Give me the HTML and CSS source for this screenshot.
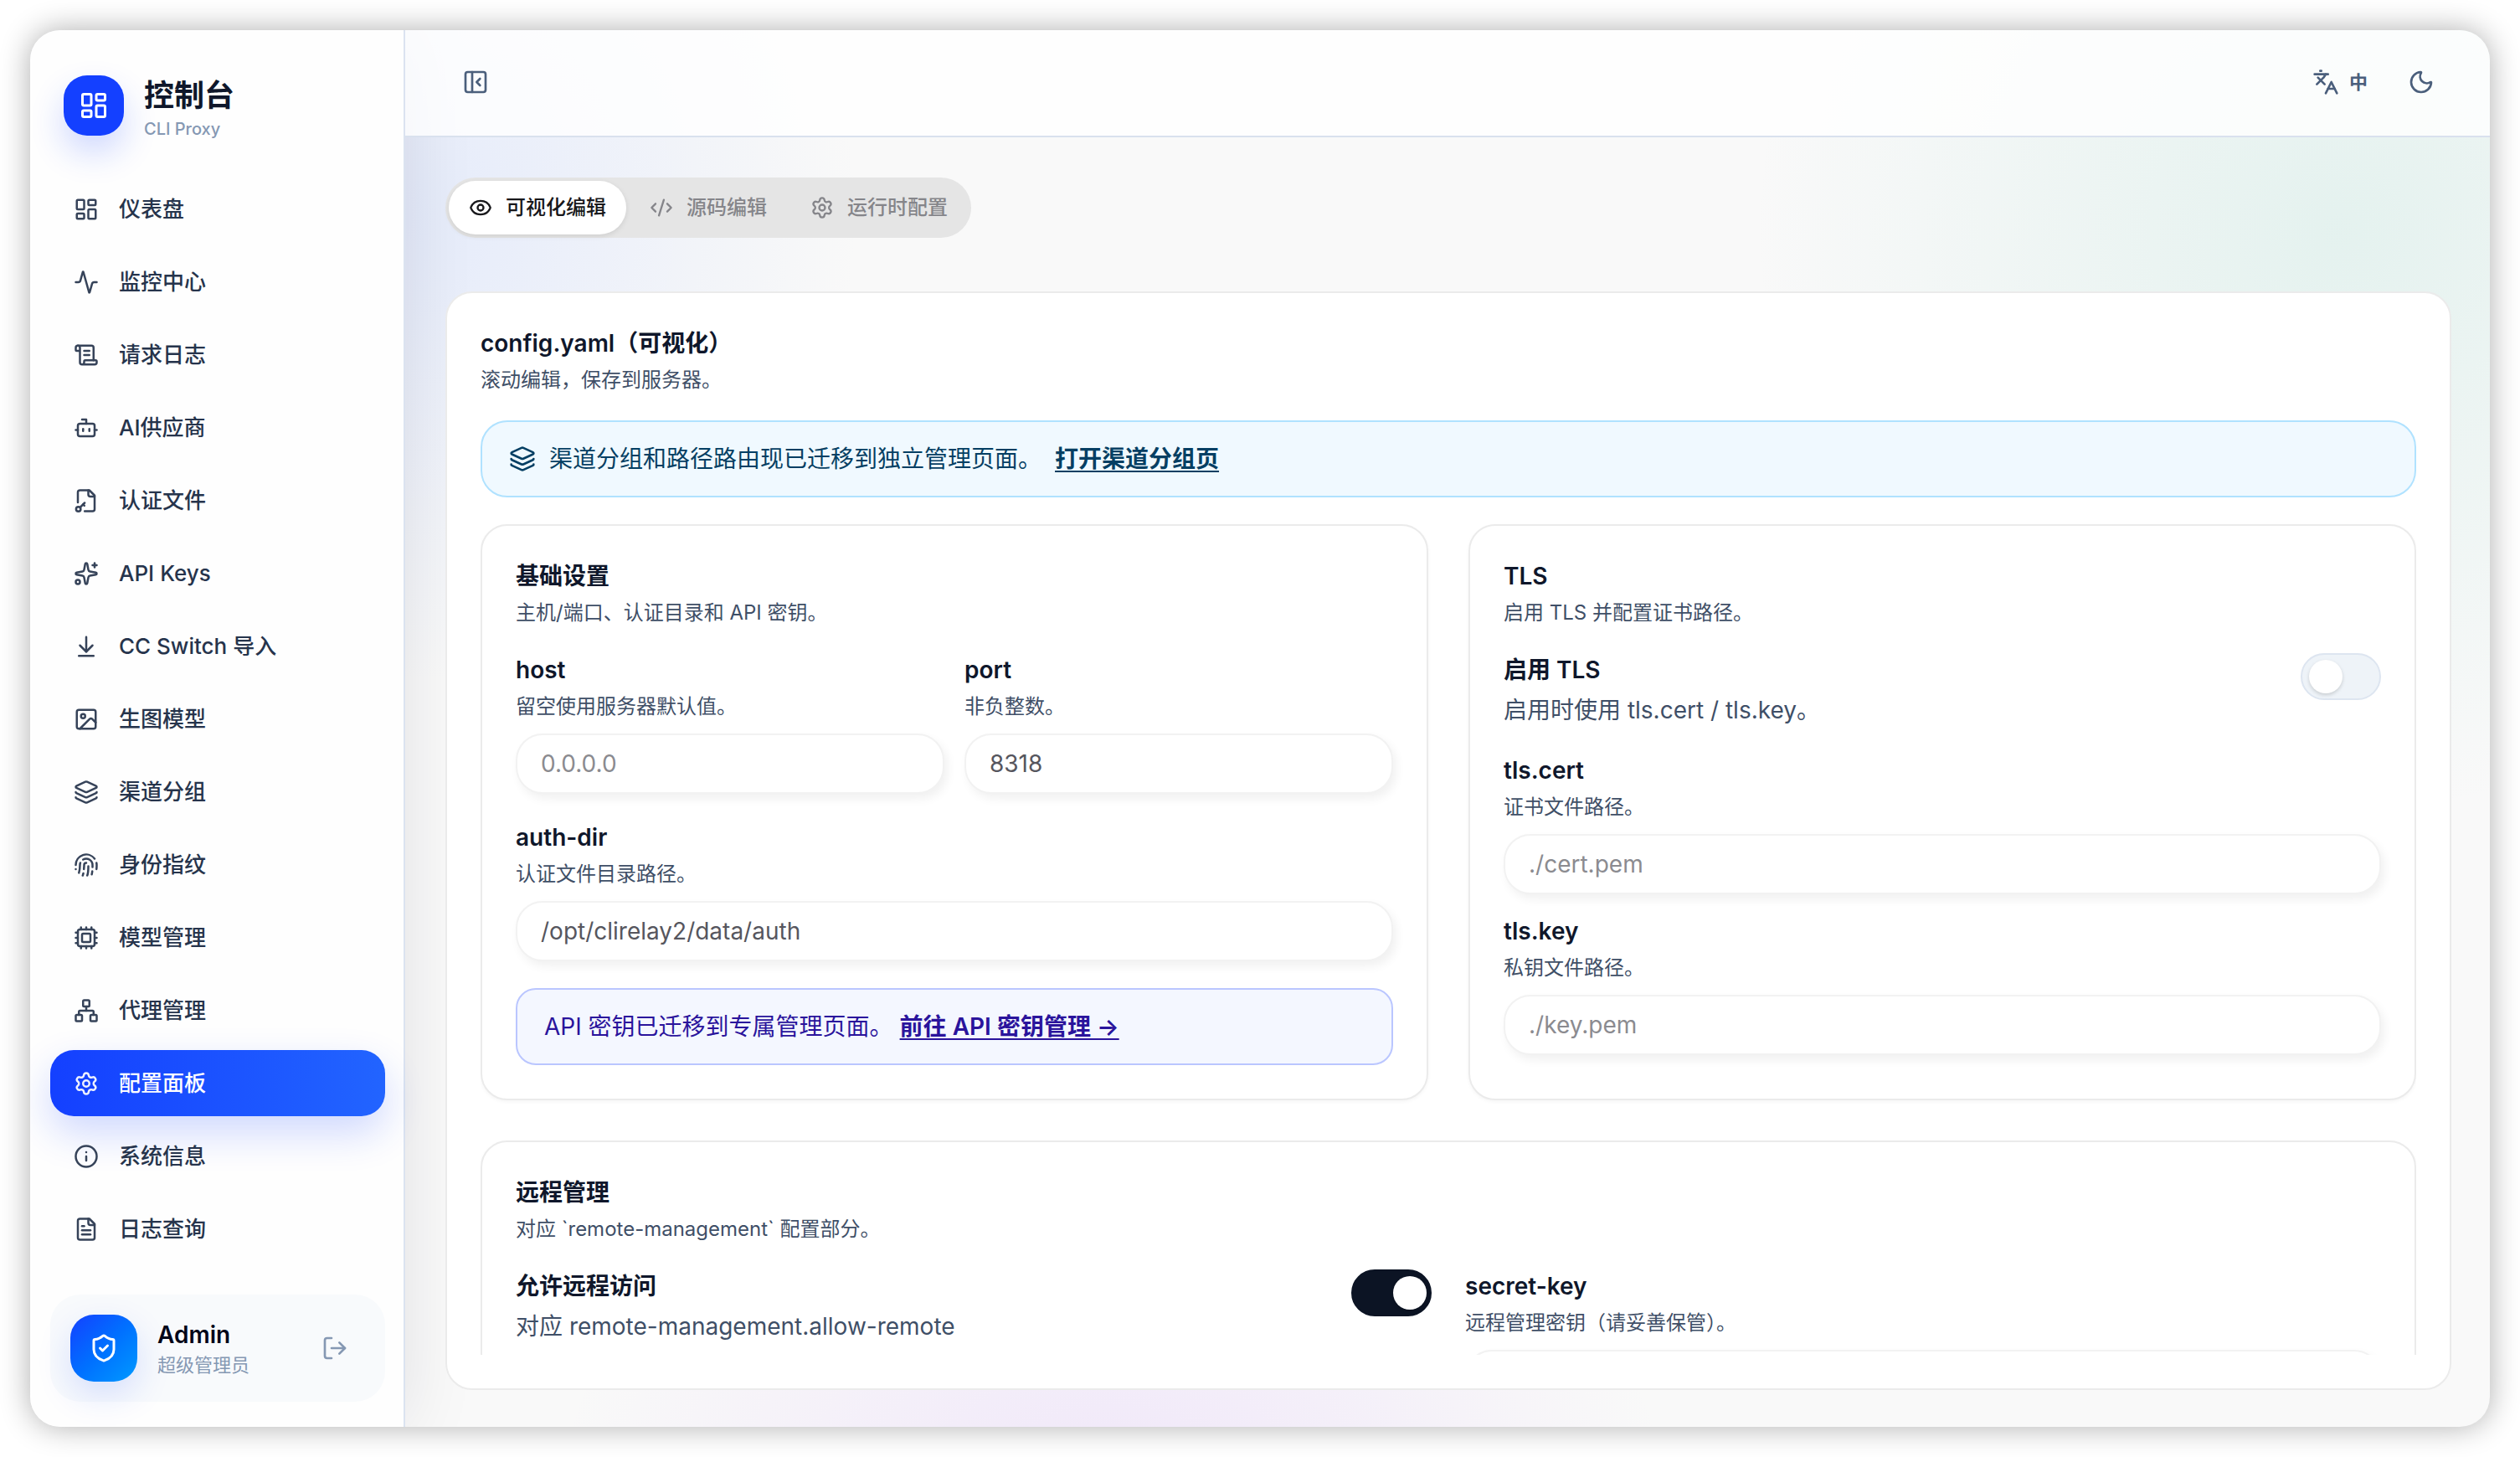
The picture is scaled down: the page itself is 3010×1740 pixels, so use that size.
FILE: index.html
```html
<!DOCTYPE html>
<html lang="zh-CN">
<head>
<meta charset="utf-8">
<meta name="viewport" content="width=device-width, initial-scale=1">
<title>控制台 - 配置面板</title>
<link rel="stylesheet" href="styles.css">
</head>
<body>
<div class="window">
  <aside class="sidebar">
    <div class="brand">
      <div class="brand-logo">
        <svg class="icon" viewBox="0 0 24 24" aria-hidden="true"><rect width="7" height="9" x="3" y="3" rx="1"/><rect width="7" height="5" x="14" y="3" rx="1"/><rect width="7" height="9" x="14" y="12" rx="1"/><rect width="7" height="5" x="3" y="16" rx="1"/></svg>
      </div>
      <div>
        <div class="brand-title">控制台</div>
        <div class="brand-sub">CLI Proxy</div>
      </div>
    </div>
    <nav class="nav">
      <a class="nav-item" href="#dashboard"><svg class="icon" viewBox="0 0 24 24" aria-hidden="true"><rect width="7" height="9" x="3" y="3" rx="1"/><rect width="7" height="5" x="14" y="3" rx="1"/><rect width="7" height="9" x="14" y="12" rx="1"/><rect width="7" height="5" x="3" y="16" rx="1"/></svg>仪表盘</a>
      <a class="nav-item" href="#monitor"><svg class="icon" viewBox="0 0 24 24" aria-hidden="true"><path d="M22 12h-2.48a2 2 0 0 0-1.93 1.46l-2.35 8.36a.25.25 0 0 1-.48 0L9.24 2.18a.25.25 0 0 0-.48 0l-2.35 8.36A2 2 0 0 1 4.49 12H2"/></svg>监控中心</a>
      <a class="nav-item" href="#requests"><svg class="icon" viewBox="0 0 24 24" aria-hidden="true"><path d="M15 12h-5"/><path d="M15 8h-5"/><path d="M19 17V5a2 2 0 0 0-2-2H4"/><path d="M8 21h12a2 2 0 0 0 2-2v-1a1 1 0 0 0-1-1H11a1 1 0 0 0-1 1v1a2 2 0 1 1-4 0V5a2 2 0 1 0-4 0v2a1 1 0 0 0 1 1h3"/></svg>请求日志</a>
      <a class="nav-item" href="#providers"><svg class="icon" viewBox="0 0 24 24" aria-hidden="true"><path d="M12 8V4H8"/><rect width="16" height="12" x="4" y="8" rx="2"/><path d="M2 14h2"/><path d="M20 14h2"/><path d="M15 13v2"/><path d="M9 13v2"/></svg>AI供应商</a>
      <a class="nav-item" href="#auth-files"><svg class="icon" viewBox="0 0 24 24" aria-hidden="true"><path d="M14 2v4a2 2 0 0 0 2 2h4"/><path d="M4 13.5V4a2 2 0 0 1 2-2h9l5 5v13a2 2 0 0 1-2 2h-7.500"/><circle cx="4.500" cy="20" r="2.200"/><path d="m6 18.500 4.500-4.500"/><path d="m9 15.500 1.200 1.200"/></svg>认证文件</a>
      <a class="nav-item" href="#api-keys"><svg class="icon" viewBox="0 0 24 24" aria-hidden="true"><path d="M11.017 2.814a1 1 0 0 1 1.966 0l1.051 5.558a2 2 0 0 0 1.594 1.594l5.558 1.051a1 1 0 0 1 0 1.966l-5.558 1.051a2 2 0 0 0-1.594 1.594l-1.051 5.558a1 1 0 0 1-1.966 0l-1.051-5.558a2 2 0 0 0-1.594-1.594l-5.558-1.051a1 1 0 0 1 0-1.966l5.558-1.051a2 2 0 0 0 1.594-1.594z"/><path d="M20 2v4"/><path d="M22 4h-4"/><circle cx="4" cy="20" r="2"/></svg>API Keys</a>
      <a class="nav-item" href="#cc-switch"><svg class="icon" viewBox="0 0 24 24" aria-hidden="true"><path d="M12 17V3"/><path d="m6 11 6 6 6-6"/><path d="M19 21H5"/></svg>CC Switch 导入</a>
      <a class="nav-item" href="#image-models"><svg class="icon" viewBox="0 0 24 24" aria-hidden="true"><rect width="18" height="18" x="3" y="3" rx="2"/><circle cx="9" cy="9" r="2"/><path d="m21 15-3.086-3.086a2 2 0 0 0-2.828 0L6 21"/></svg>生图模型</a>
      <a class="nav-item" href="#channels"><svg class="icon" viewBox="0 0 24 24" aria-hidden="true"><path d="M12.830 2.180a2 2 0 0 0-1.660 0L2.600 6.080a1 1 0 0 0 0 1.830l8.580 3.910a2 2 0 0 0 1.660 0l8.580-3.900a1 1 0 0 0 0-1.830z"/><path d="M2 12a1 1 0 0 0 .58.91l8.600 3.910a2 2 0 0 0 1.650 0l8.580-3.900A1 1 0 0 0 22 12"/><path d="M2 17a1 1 0 0 0 .58.91l8.600 3.910a2 2 0 0 0 1.650 0l8.580-3.900A1 1 0 0 0 22 17"/></svg>渠道分组</a>
      <a class="nav-item" href="#fingerprints"><svg class="icon" viewBox="0 0 24 24" aria-hidden="true"><path d="M12 10a2 2 0 0 0-2 2c0 1.020-.1 2.510-.26 4"/><path d="M14 13.120c0 2.380 0 6.380-1 8.880"/><path d="M17.290 21.020c.12-.6.430-2.300.5-3.020"/><path d="M2 12a10 10 0 0 1 18-6"/><path d="M2 16h.01"/><path d="M21.800 16c.2-2 .131-5.354 0-6"/><path d="M5 19.500C5.500 18 6 15 6 12a6 6 0 0 1 .34-2"/><path d="M8.650 22c.21-.66.450-1.320.570-2"/><path d="M9 6.800a6 6 0 0 1 9 5.200v2"/></svg>身份指纹</a>
      <a class="nav-item" href="#models"><svg class="icon" viewBox="0 0 24 24" aria-hidden="true"><path d="M12 20v2M12 2v2M17 20v2M17 2v2M2 12h2M2 17h2M2 7h2M20 12h2M20 17h2M20 7h2M7 20v2M7 2v2"/><rect x="4" y="4" width="16" height="16" rx="2"/><rect x="8" y="8" width="8" height="8" rx="1"/></svg>模型管理</a>
      <a class="nav-item" href="#proxies"><svg class="icon" viewBox="0 0 24 24" aria-hidden="true"><rect x="16" y="16" width="6" height="6" rx="1"/><rect x="2" y="16" width="6" height="6" rx="1"/><rect x="9" y="2" width="6" height="6" rx="1"/><path d="M5 16v-3a1 1 0 0 1 1-1h12a1 1 0 0 1 1 1v3"/><path d="M12 12V8"/></svg>代理管理</a>
      <a class="nav-item active" href="#config" aria-current="page"><svg class="icon" viewBox="0 0 24 24" aria-hidden="true"><path d="M9.671 4.136a2.340 2.340 0 0 1 4.659 0 2.340 2.340 0 0 0 3.319 1.915 2.340 2.340 0 0 1 2.330 4.033 2.340 2.340 0 0 0 0 3.831 2.340 2.340 0 0 1-2.330 4.033 2.340 2.340 0 0 0-3.319 1.915 2.340 2.340 0 0 1-4.659 0 2.340 2.340 0 0 0-3.320-1.915 2.340 2.340 0 0 1-2.330-4.033 2.340 2.340 0 0 0 0-3.831A2.340 2.340 0 0 1 6.350 6.051a2.340 2.340 0 0 0 3.319-1.915"/><circle cx="12" cy="12" r="3"/></svg>配置面板</a>
      <a class="nav-item" href="#system"><svg class="icon" viewBox="0 0 24 24" aria-hidden="true"><circle cx="12" cy="12" r="10"/><path d="M12 16v-4"/><path d="M12 8h.01"/></svg>系统信息</a>
      <a class="nav-item" href="#logs"><svg class="icon" viewBox="0 0 24 24" aria-hidden="true"><path d="M15 2H6a2 2 0 0 0-2 2v16a2 2 0 0 0 2 2h12a2 2 0 0 0 2-2V7Z"/><path d="M14 2v4a2 2 0 0 0 2 2h4"/><path d="M10 9H8"/><path d="M16 13H8"/><path d="M16 17H8"/></svg>日志查询</a>
    </nav>
    <div class="user">
      <div class="avatar"><svg class="icon" viewBox="0 0 24 24" aria-hidden="true"><path d="M20 13c0 5-3.500 7.500-7.660 8.950a1 1 0 0 1-.67-.01C7.500 20.500 4 18 4 13V6a1 1 0 0 1 1-1c2 0 4.500-1.200 6.240-2.720a1.170 1.170 0 0 1 1.520 0C14.510 3.810 17 5 19 5a1 1 0 0 1 1 1z"/><path d="m9 12 2 2 4-4"/></svg></div>
      <div class="user-text">
        <div class="user-name">Admin</div>
        <div class="user-role">超级管理员</div>
      </div>
      <button class="icon-btn logout" type="button" aria-label="退出登录"><svg class="icon" viewBox="0 0 24 24" aria-hidden="true"><path d="m16 17 5-5-5-5"/><path d="M21 12H9"/><path d="M9 21H5a2 2 0 0 1-2-2V5a2 2 0 0 1 2-2h4"/></svg></button>
    </div>
  </aside>

  <div class="main">
    <header class="topbar">
      <button class="icon-btn" type="button" aria-label="收起侧栏"><svg class="icon" viewBox="0 0 24 24" aria-hidden="true"><rect width="18" height="18" x="3" y="3" rx="2"/><path d="M9 3v18"/><path d="m16 15-3-3 3-3"/></svg></button>
      <div class="topbar-actions">
        <button class="icon-btn lang" type="button" aria-label="切换语言"><svg class="icon" viewBox="0 0 24 24" aria-hidden="true"><path d="m5 8 6 6"/><path d="m4 14 6-6 2-3"/><path d="M2 5h12"/><path d="M7 2h1"/><path d="m22 22-5-10-5 10"/><path d="M14 18h6"/></svg><span>中</span></button>
        <button class="icon-btn" type="button" aria-label="切换主题"><svg class="icon" viewBox="0 0 24 24" aria-hidden="true"><path d="M20.985 12.486a9 9 0 1 1-9.473-9.472c.405-.022.617.460.402.803a6 6 0 0 0 8.268 8.268c.344-.215.825-.004.803.401"/></svg></button>
      </div>
    </header>

    <main class="content">
      <div class="tabs" role="tablist">
        <button class="tab selected" type="button" role="tab" aria-selected="true"><svg class="icon" viewBox="0 0 24 24" aria-hidden="true"><path d="M2.062 12.348a1 1 0 0 1 0-.696 10.750 10.750 0 0 1 19.876 0 1 1 0 0 1 0 .696 10.750 10.750 0 0 1-19.876 0"/><circle cx="12" cy="12" r="3"/></svg>可视化编辑</button>
        <button class="tab" type="button" role="tab" aria-selected="false"><svg class="icon" viewBox="0 0 24 24" aria-hidden="true"><path d="m18 16 4-4-4-4"/><path d="m6 8-4 4 4 4"/><path d="m14.500 4-5 16"/></svg>源码编辑</button>
        <button class="tab" type="button" role="tab" aria-selected="false"><svg class="icon" viewBox="0 0 24 24" aria-hidden="true"><path d="M9.671 4.136a2.340 2.340 0 0 1 4.659 0 2.340 2.340 0 0 0 3.319 1.915 2.340 2.340 0 0 1 2.330 4.033 2.340 2.340 0 0 0 0 3.831 2.340 2.340 0 0 1-2.330 4.033 2.340 2.340 0 0 0-3.319 1.915 2.340 2.340 0 0 1-4.659 0 2.340 2.340 0 0 0-3.320-1.915 2.340 2.340 0 0 1-2.330-4.033 2.340 2.340 0 0 0 0-3.831A2.340 2.340 0 0 1 6.350 6.051a2.340 2.340 0 0 0 3.319-1.915"/><circle cx="12" cy="12" r="3"/></svg>运行时配置</button>
      </div>

      <section class="panel">
        <div class="panel-scroll">
          <div class="heading">
            <h1 class="title">config.yaml（可视化）</h1>
            <p class="hint">滚动编辑，保存到服务器。</p>
          </div>

          <div class="notice notice-sky">
            <svg class="icon" viewBox="0 0 24 24" aria-hidden="true"><path d="M12.830 2.180a2 2 0 0 0-1.660 0L2.600 6.080a1 1 0 0 0 0 1.830l8.580 3.910a2 2 0 0 0 1.660 0l8.580-3.900a1 1 0 0 0 0-1.830z"/><path d="M2 12a1 1 0 0 0 .58.91l8.600 3.910a2 2 0 0 0 1.650 0l8.580-3.900A1 1 0 0 0 22 12"/><path d="M2 17a1 1 0 0 0 .58.91l8.600 3.910a2 2 0 0 0 1.650 0l8.580-3.900A1 1 0 0 0 22 17"/></svg>
            <span>渠道分组和路径路由现已迁移到独立管理页面。</span>
            <a href="#channels">打开渠道分组页</a>
          </div>

          <div class="sections">
            <section class="section">
              <div class="heading">
                <h2 class="title">基础设置</h2>
                <p class="hint">主机/端口、认证目录和 API 密钥。</p>
              </div>
              <div class="pair">
                <div class="field">
                  <label class="title" for="host">host</label>
                  <p class="hint">留空使用服务器默认值。</p>
                  <input class="input" id="host" type="text" placeholder="0.0.0.0">
                </div>
                <div class="field">
                  <label class="title" for="port">port</label>
                  <p class="hint">非负整数。</p>
                  <input class="input" id="port" type="text" value="8318">
                </div>
              </div>
              <div class="field">
                <label class="title" for="auth-dir">auth-dir</label>
                <p class="hint">认证文件目录路径。</p>
                <input class="input" id="auth-dir" type="text" value="/opt/clirelay2/data/auth">
              </div>
              <p class="notice notice-indigo"><span>API 密钥已迁移到专属管理页面。</span><a href="#api-keys">前往 API 密钥管理 →</a></p>
            </section>

            <section class="section">
              <div class="heading">
                <h2 class="title">TLS</h2>
                <p class="hint">启用 TLS 并配置证书路径。</p>
              </div>
              <div class="switch-row">
                <div class="heading">
                  <label class="title" for="tls-enable">启用 TLS</label>
                  <p class="desc">启用时使用 tls.cert / tls.key。</p>
                </div>
                <input class="switch" id="tls-enable" type="checkbox" role="switch">
              </div>
              <div class="fields">
                <div class="field">
                  <label class="title" for="tls-cert">tls.cert</label>
                  <p class="hint">证书文件路径。</p>
                  <input class="input" id="tls-cert" type="text" placeholder="./cert.pem">
                </div>
                <div class="field">
                  <label class="title" for="tls-key">tls.key</label>
                  <p class="hint">私钥文件路径。</p>
                  <input class="input" id="tls-key" type="text" placeholder="./key.pem">
                </div>
              </div>
            </section>

            <section class="section wide">
              <div class="heading">
                <h2 class="title">远程管理</h2>
                <p class="hint">对应 `remote-management` 配置部分。</p>
              </div>
              <div class="pair pair-loose">
                <div class="switch-row">
                  <div class="heading">
                    <label class="title" for="allow-remote">允许远程访问</label>
                    <p class="desc">对应 remote-management.allow-remote</p>
                  </div>
                  <input class="switch" id="allow-remote" type="checkbox" role="switch" checked>
                </div>
                <div class="field">
                  <label class="title" for="secret-key">secret-key</label>
                  <p class="hint">远程管理密钥（请妥善保管）。</p>
                  <input class="input" id="secret-key" type="password">
                </div>
              </div>
            </section>
          </div>
        </div>
      </section>
    </main>
  </div>
</div>
</body>
</html>
```
FILE: styles.css
```css
*, *::before, *::after { box-sizing: border-box; }

body {
  margin: 0;
  height: 100vh;
  padding: 36px;
  background: #fff;
  color: #0f172b;
  font-family: Inter, "Noto Sans CJK SC", sans-serif;
  font-size: 28px;
  line-height: 40px;
}

h1, h2, p { margin: 0; }

button, input { font: inherit; color: inherit; }

button {
  border: 0;
  padding: 0;
  background: none;
}

.icon {
  flex: none;
  width: 32px;
  height: 32px;
  fill: none;
  stroke: currentColor;
  stroke-width: 2;
  stroke-linecap: round;
  stroke-linejoin: round;
}

/* Window shell */
.window {
  display: flex;
  height: 100%;
  overflow: hidden;
  border-radius: 36px;
  background:
    radial-gradient(circle 560px at 430px 220px, rgba(150, 180, 255, 0.21), rgba(150, 180, 255, 0) 100%),
    radial-gradient(circle 700px at calc(100% - 180px) 240px, rgba(110, 200, 180, 0.15), rgba(110, 200, 180, 0) 100%),
    radial-gradient(ellipse 660px 420px at 44% 104%, rgba(200, 150, 250, 0.18), rgba(200, 150, 250, 0) 100%),
    #f9f9f9;
  box-shadow: 0 0 36px rgba(0, 0, 0, 0.32);
}

/* Sidebar */
.sidebar {
  flex: none;
  display: flex;
  flex-direction: column;
  width: 448px;
  padding: 54px 22px 30px 24px;
  border-right: 2px solid #dbe3f0;
  background: #fefefe;
  box-shadow: 0 0 80px rgba(15, 23, 43, 0.1);
}

.brand {
  display: flex;
  align-items: flex-start;
  gap: 24px;
  padding: 0 16px;
}

.brand-logo {
  display: grid;
  place-items: center;
  width: 72px;
  height: 72px;
  border-radius: 28px;
  background: #1440ff;
  color: #fff;
  box-shadow: 0 20px 40px rgba(20, 64, 255, 0.2);
}

.brand-logo .icon { width: 36px; height: 36px; }

.brand-title {
  font-size: 36px;
  font-weight: 600;
  line-height: 48px;
}

.brand-sub {
  font-size: 20px;
  font-weight: 500;
  line-height: 32px;
  color: #8598b3;
}

.nav {
  display: flex;
  flex-direction: column;
  gap: 8px;
  margin-top: 40px;
}

.nav-item {
  display: flex;
  align-items: center;
  gap: 24px;
  padding: 20px 28px;
  border-radius: 28px;
  font-size: 26px;
  font-weight: 500;
  line-height: 39px;
  color: #26344c;
  text-decoration: none;
}

.nav-item .icon {
  width: 30px;
  height: 30px;
  opacity: 0.92;
}

.nav-item.active {
  background: linear-gradient(90deg, #1440ff, #2264ff);
  color: #fff;
  box-shadow: 0 20px 48px rgba(20, 64, 255, 0.2);
}

.user {
  display: flex;
  align-items: center;
  gap: 24px;
  margin-top: auto;
  padding: 24px;
  border-radius: 36px;
  background: #f8fafc;
}

.avatar {
  display: grid;
  place-items: center;
  width: 80px;
  height: 80px;
  border-radius: 28px;
  background: linear-gradient(135deg, #1440ff, #0070ff 50%, #009aff);
  color: #fff;
  box-shadow: 0 16px 40px rgba(20, 64, 255, 0.15);
}

.avatar .icon { width: 36px; height: 36px; }

.user-text { flex: 1; }

.user-name {
  font-weight: 600;
  line-height: 40px;
  color: #020618;
}

.user-role {
  font-size: 22px;
  line-height: 32px;
  color: #8598b3;
}

/* Top bar */
.main {
  flex: 1;
  display: flex;
  flex-direction: column;
  min-width: 0;
}

.topbar {
  flex: none;
  display: flex;
  align-items: center;
  justify-content: space-between;
  height: 128px;
  padding: 0 66px 2px 68px;
  border-bottom: 2px solid #d9e1ee;
  background: rgba(255, 255, 255, 0.8);
  color: #4b5f7c;
}

.topbar-actions {
  display: flex;
  align-items: center;
  gap: 48px;
}

.icon-btn {
  display: flex;
  align-items: center;
  gap: 12px;
}

.lang {
  font-size: 22px;
  font-weight: 600;
  line-height: 32px;
}

.logout {
  margin-right: 20px;
  color: #8598b3;
}

/* Tabs */
.content {
  flex: 1;
  display: flex;
  flex-direction: column;
  align-items: stretch;
  gap: 64px;
  min-height: 0;
  padding: 48px 46px 44px 48px;
}

.tabs {
  flex: none;
  align-self: flex-start;
  display: flex;
  gap: 4px;
  padding: 4px;
  border-radius: 36px;
  background: #e5e5e5;
}

.tab {
  display: flex;
  align-items: center;
  gap: 16px;
  height: 64px;
  padding: 0 24px;
  border-radius: 32px;
  font-size: 24px;
  font-weight: 500;
  color: #85858a;
}

.tab .icon { width: 28px; height: 28px; }

.tab.selected {
  background: #fff;
  color: #18181b;
  box-shadow: 0 2px 6px rgba(0, 0, 0, 0.1);
}

/* Config panel */
.panel {
  flex: 1;
  min-height: 0;
  padding: 40px;
  border: 2px solid #ebebeb;
  border-radius: 32px;
  background: #fff;
}

.panel-scroll {
  display: flex;
  flex-direction: column;
  gap: 32px;
  height: 100%;
  overflow: hidden;
}

.heading,
.field {
  display: flex;
  flex-direction: column;
  gap: 8px;
}

.title {
  font-size: 28px;
  font-weight: 600;
  line-height: 40px;
  color: #0f172b;
}

.hint {
  font-size: 24px;
  line-height: 32px;
  color: #3f4f67;
}

.desc { color: #3f4f67; }

.notice {
  display: flex;
  align-items: center;
  padding: 24px 32px;
  border: 2px solid;
}

.notice a {
  color: inherit;
  font-weight: 600;
  text-decoration-thickness: 2px;
  text-underline-offset: 4px;
}

.notice-sky {
  gap: 16px;
  border-color: #b0e2ff;
  border-radius: 32px;
  background: #f0f9ff;
  color: #053f63;
}

.notice-indigo {
  gap: 8px;
  border-color: #bac6ff;
  border-radius: 24px;
  background: #f4f7ff;
  color: #2a149c;
}

.sections {
  display: grid;
  grid-template-columns: 1fr 1fr;
  gap: 48px;
}

.section {
  display: flex;
  flex-direction: column;
  gap: 32px;
  padding: 40px;
  border: 2px solid #ebebeb;
  border-radius: 32px;
  background: #fff;
  box-shadow: 0 2px 4px rgba(0, 0, 0, 0.04);
}

.wide { grid-column: 1 / -1; }

.pair {
  display: grid;
  grid-template-columns: 1fr 1fr;
  gap: 24px;
}

.pair-loose { gap: 40px; }

.fields {
  display: flex;
  flex-direction: column;
  gap: 24px;
}

.input {
  width: 100%;
  height: 72px;
  margin-top: 8px;
  padding: 0 28px;
  border: 2px solid #f2f2f2;
  border-radius: 32px;
  outline: 0;
  background: #fff;
  color: #56565e;
  box-shadow: 4px 6px 12px rgba(0, 0, 0, 0.06);
}

.input::placeholder { color: #8b8b90; opacity: 1; }

.switch-row {
  display: flex;
  align-items: flex-start;
  justify-content: space-between;
}

.switch {
  appearance: none;
  display: flex;
  align-items: center;
  width: 96px;
  height: 56px;
  margin: 0;
  padding: 0 8px;
  border: 2px solid #dde5f0;
  border-radius: 28px;
  background: #eef3f8;
}

.switch::before {
  content: "";
  width: 40px;
  height: 40px;
  border-radius: 50%;
  background: #fff;
  box-shadow: 0 2px 4px rgba(0, 0, 0, 0.16);
}

.switch:checked {
  justify-content: flex-end;
  padding: 0 4px;
  border-color: #0c1424;
  background: #0c1424;
}
```
